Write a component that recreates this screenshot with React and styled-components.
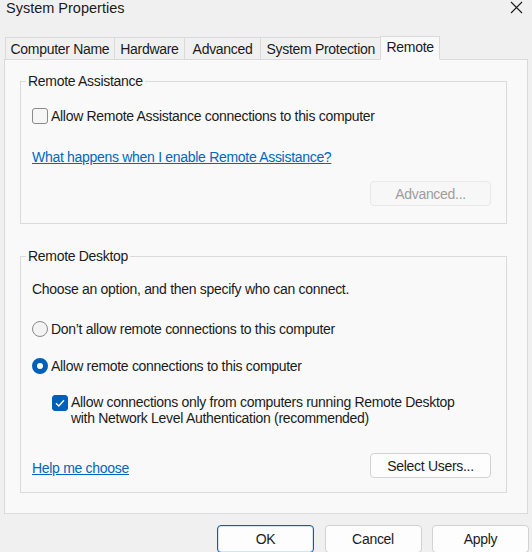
import styled, { createGlobalStyle } from "styled-components";

const GlobalStyle = createGlobalStyle`
  html, body {
    margin: 0;
    padding: 0;
    background: #f0f0f0;
  }
  body {
    font-family: "Liberation Sans", Arial, sans-serif;
    font-size: 14px;
    letter-spacing: -0.3px;
    color: #1b1b1b;
  }
`;

const Window = styled.div`
  width: 532px;
  height: 552px;
  overflow: hidden;
  background: #f0f0f0;
`;

const TitleBar = styled.div`
  height: 35px;
  display: flex;
  justify-content: space-between;
  align-items: flex-start;
  padding: 0 9px 0 6px;
  box-sizing: border-box;
  h1 {
    margin: 0;
    font-size: 14.5px;
    font-weight: 400;
    letter-spacing: 0;
    line-height: 16px;
  }
`;

const Close = styled.svg`
  margin-top: 1px;
`;

const TabStrip = styled.div`
  display: flex;
  align-items: flex-end;
  height: 24px;
  margin-left: 5px;
  position: relative;
  z-index: 1;
`;

const Tab = styled.div`
  height: ${(p) => (p.$active ? "24px" : "22px")};
  line-height: ${(p) => (p.$active ? "21px" : "22px")};
  padding: 0 ${(p) => p.$pad || 6}px;
  box-sizing: border-box;
  border: 1px solid #dadada;
  border-bottom: ${(p) => (p.$active ? "1px solid #f9f9f9" : "none")};
  border-right: ${(p) => (p.$active ? "1px solid #dadada" : "none")};
  background: ${(p) => (p.$active ? "#f9f9f9" : "#f0f0f0")};
  margin-bottom: ${(p) => (p.$active ? "-1px" : "0")};
  white-space: nowrap;
`;

const Panel = styled.div`
  margin: 0 4px;
  height: 455px;
  box-sizing: border-box;
  border: 1px solid #dadada;
  background: #f9f9f9;
  padding: 12px 20px 0 15px;
`;

const GroupBox = styled.fieldset`
  margin: 0 0 ${(p) => p.$gap || 0}px;
  border: 1px solid #dadada;
  padding: ${(p) => p.$top}px 15px ${(p) => p.$bottom}px 11px;
  min-width: 0;
  display: flex;
  flex-direction: column;
  legend {
    margin-left: -6px;
    padding: 0 2px;
    line-height: 18px;
  }
`;

const Row = styled.label`
  display: flex;
  align-items: center;
  gap: 3px;
  line-height: 18px;
  white-space: nowrap;
  margin-top: ${(p) => p.$top || 0}px;
  margin-left: ${(p) => p.$indent || 0}px;
`;

const MultiRow = styled(Row)`
  align-items: flex-start;
  line-height: 16px;
  span {
    margin-top: 1px;
  }
`;

const Box = styled.span`
  flex: none;
  width: 16px;
  height: 16px;
  box-sizing: border-box;
  border-radius: 3px;
  border: 1px solid ${(p) => (p.$checked ? "#005fb8" : "#8a8a8a")};
  background: ${(p) => (p.$checked ? "#005fb8" : "#f6f6f6")};
  display: flex;
  align-items: center;
  justify-content: center;
`;

const Radio = styled.span`
  flex: none;
  width: 16px;
  height: 16px;
  box-sizing: border-box;
  border-radius: 50%;
  border: ${(p) => (p.$checked ? "5px solid #005fb8" : "1px solid #8a8a8a")};
  background: ${(p) => (p.$checked ? "#ffffff" : "#f3f3f3")};
`;

const Link = styled.a`
  color: #0067c0;
  text-decoration: underline;
  line-height: 18px;
  align-self: flex-start;
  margin-top: ${(p) => p.$top || 0}px;
  cursor: pointer;
`;

const Text = styled.div`
  line-height: 18px;
`;

const Button = styled.button`
  width: ${(p) => p.$width || 121}px;
  height: ${(p) => p.$height || 25}px;
  font: inherit;
  font-size: 14px;
  letter-spacing: -0.3px;
  border-radius: 4px;
  box-sizing: border-box;
  border: 1px solid ${(p) => (p.$primary ? "#005fb8" : p.disabled ? "#e8e8e8" : "#d2d2d2")};
  box-shadow: ${(p) => (p.$primary ? "inset 0 0 0 1px #d5e4f3" : "none")};
  background: ${(p) => (p.disabled ? "#f7f7f7" : "#fdfdfd")};
  color: ${(p) => (p.disabled ? "#9d9d9d" : "#1b1b1b")};
  padding: 0;
`;

const ButtonRight = styled.div`
  display: flex;
  justify-content: flex-end;
  margin-top: ${(p) => p.$top || 0}px;
`;

const Footer = styled.div`
  display: flex;
  justify-content: space-between;
  align-items: flex-start;
  margin-top: 27px;
`;

const DialogButtons = styled.div`
  display: flex;
  justify-content: flex-end;
  gap: 10.5px;
  padding-right: 3px;
  margin-top: 11px;
`;

const Check = () => (
  <svg width="10" height="8" viewBox="0 0 10 8">
    <path d="M1 4.2 L3.8 7 L9 1.2" fill="none" stroke="#fff" strokeWidth="1.3" />
  </svg>
);

export default function App() {
  return (
    <Window>
      <GlobalStyle />
      <TitleBar>
        <h1>System Properties</h1>
        <Close width="13" height="13" viewBox="0 0 13 13">
          <path d="M1 1 L12 12 M12 1 L1 12" stroke="#1b1b1b" strokeWidth="1.1" />
        </Close>
      </TitleBar>
      <TabStrip>
        <Tab $pad={4.5}>Computer Name</Tab>
        <Tab $pad={5.5}>Hardware</Tab>
        <Tab $pad={7.5}>Advanced</Tab>
        <Tab $pad={5.5}>System Protection</Tab>
        <Tab $pad={5} $active>Remote</Tab>
      </TabStrip>
      <Panel>
        <GroupBox $gap={23} $top={17} $bottom={17}>
          <legend>Remote Assistance</legend>
          <Row>
            <Box />
            Allow Remote Assistance connections to this computer
          </Row>
          <Link $top={23}>What happens when I enable Remote Assistance?</Link>
          <ButtonRight $top={15}>
            <Button disabled>Advanced...</Button>
          </ButtonRight>
        </GroupBox>
        <GroupBox $top={15} $bottom={14}>
          <legend>Remote Desktop</legend>
          <Text>Choose an option, and then specify who can connect.</Text>
          <Row $top={22}>
            <Radio />
            Don’t allow remote connections to this computer
          </Row>
          <Row $top={19}>
            <Radio $checked />
            Allow remote connections to this computer
          </Row>
          <MultiRow $top={19} $indent={20}>
            <Box $checked>
              <Check />
            </Box>
            <div>
              Allow connections only from computers running Remote Desktop
              <br />
              with Network Level Authentication (recommended)
            </div>
          </MultiRow>
          <Footer>
            <Link $top={6}>Help me choose</Link>
            <Button>Select Users...</Button>
          </Footer>
        </GroupBox>
      </Panel>
      <DialogButtons>
        <Button $primary $width={97} $height={28}>OK</Button>
        <Button $width={97} $height={28}>Cancel</Button>
        <Button $width={97} $height={28}>Apply</Button>
      </DialogButtons>
    </Window>
  );
}
